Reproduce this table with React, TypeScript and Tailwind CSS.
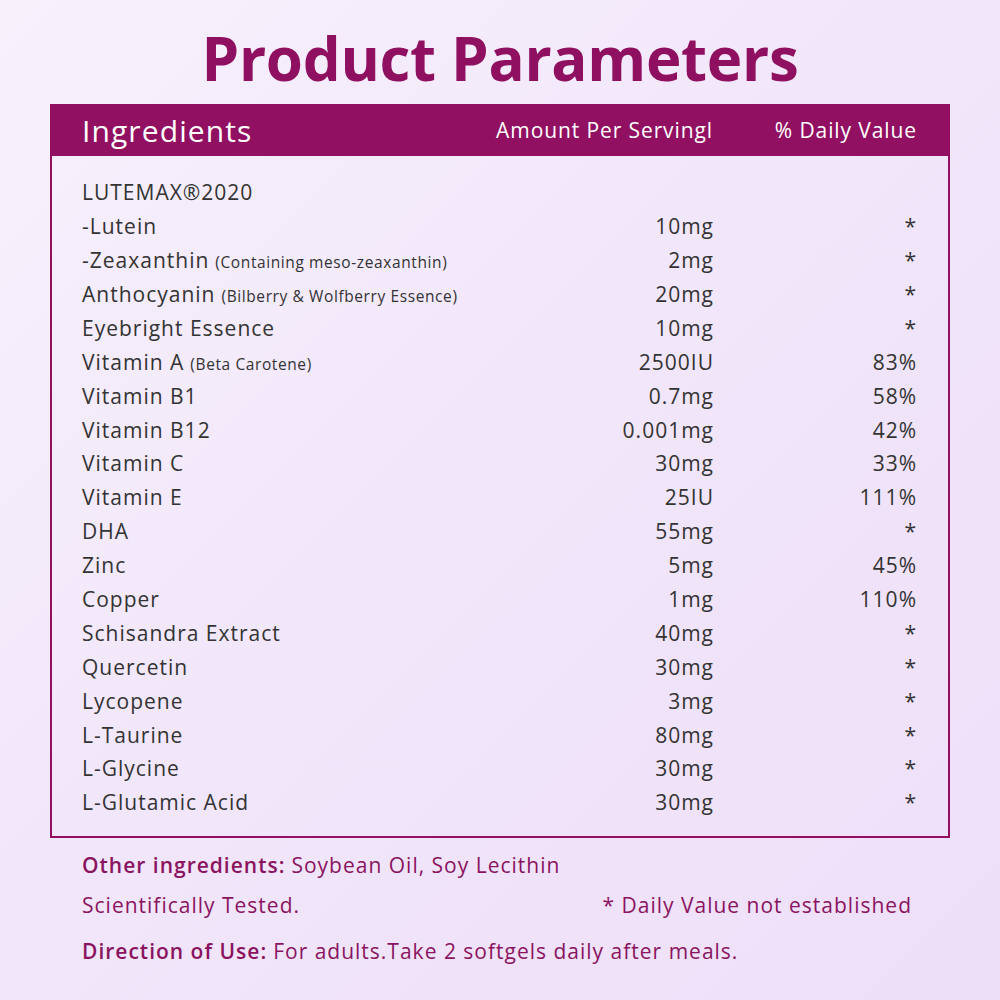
const rows: { name: string; note?: string; amount: string; dv: string }[] = [
  { name: '-Lutein', amount: '10mg', dv: '*' },
  { name: '-Zeaxanthin', note: '(Containing meso-zeaxanthin)', amount: '2mg', dv: '*' },
  { name: 'Anthocyanin', note: '(Bilberry & Wolfberry Essence)', amount: '20mg', dv: '*' },
  { name: 'Eyebright Essence', amount: '10mg', dv: '*' },
  { name: 'Vitamin A', note: '(Beta Carotene)', amount: '2500IU', dv: '83%' },
  { name: 'Vitamin B1', amount: '0.7mg', dv: '58%' },
  { name: 'Vitamin B12', amount: '0.001mg', dv: '42%' },
  { name: 'Vitamin C', amount: '30mg', dv: '33%' },
  { name: 'Vitamin E', amount: '25IU', dv: '111%' },
  { name: 'DHA', amount: '55mg', dv: '*' },
  { name: 'Zinc', amount: '5mg', dv: '45%' },
  { name: 'Copper', amount: '1mg', dv: '110%' },
  { name: 'Schisandra Extract', amount: '40mg', dv: '*' },
  { name: 'Quercetin', amount: '30mg', dv: '*' },
  { name: 'Lycopene', amount: '3mg', dv: '*' },
  { name: 'L-Taurine', amount: '80mg', dv: '*' },
  { name: 'L-Glycine', amount: '30mg', dv: '*' },
  { name: 'L-Glutamic Acid', amount: '30mg', dv: '*' },
];

export default function App() {
  return (
    <div className="w-[1000px] h-[1000px] overflow-hidden bg-gradient-to-br from-[#f7f1fc] via-[#f1e6fa] to-[#eedff8] font-['Open_Sans',sans-serif]">
      <h1 className="pt-[22px] h-[104px] text-center text-[60px] leading-[72px] font-bold text-[#8f1061] tracking-[-0.3px]">
        Product Parameters
      </h1>

      <div className="mx-[50px] border-2 border-[#921062]">
        <div className="h-[50px] bg-[#921062] flex items-center text-white pl-[30px] pr-[31px]">
          <span className="flex-1 text-[30px] leading-none tracking-[1.1px]">Ingredients</span>
          <span className="w-[300px] text-right text-[21px] tracking-[0.9px]">Amount Per Servingl</span>
          <span className="w-[204px] text-right text-[21px] tracking-[0.9px]">% Daily Value</span>
        </div>

        <div className="pl-[30px] pr-[31px] pt-[20px] pb-[16px] text-[#333] text-[21px] tracking-[1px]">
          <div className="h-[34px] flex items-center">LUTEMAX®2020</div>
          {rows.map((r) => (
            <div key={r.name} className="h-[33.9px] flex items-center">
              <span className="flex-1 whitespace-nowrap">
                {r.name}
                {r.note && <span className="text-[15.5px] ml-[6px] tracking-[0.6px]">{r.note}</span>}
              </span>
              <span className="w-[200px] text-right mr-[-1px]">{r.amount}</span>
              <span className="w-[204px] text-right">{r.dv}</span>
            </div>
          ))}
        </div>
      </div>

      <div className="pl-[82px] pr-[88px] pt-[8px] text-[21px] tracking-[1px] text-[#8a1460]">
        <div className="h-[40px] flex items-center">
          <span className="font-semibold mr-[6px]">Other ingredients:</span>Soybean Oil, Soy Lecithin
        </div>
        <div className="h-[40px] flex items-center justify-between">
          <span>Scientifically Tested.</span>
          <span>* Daily Value not established</span>
        </div>
        <div className="h-[52px] flex items-center">
          <span className="font-semibold mr-[6px]">Direction of Use:</span>For adults.Take 2 softgels daily after meals.
        </div>
      </div>
    </div>
  );
}
